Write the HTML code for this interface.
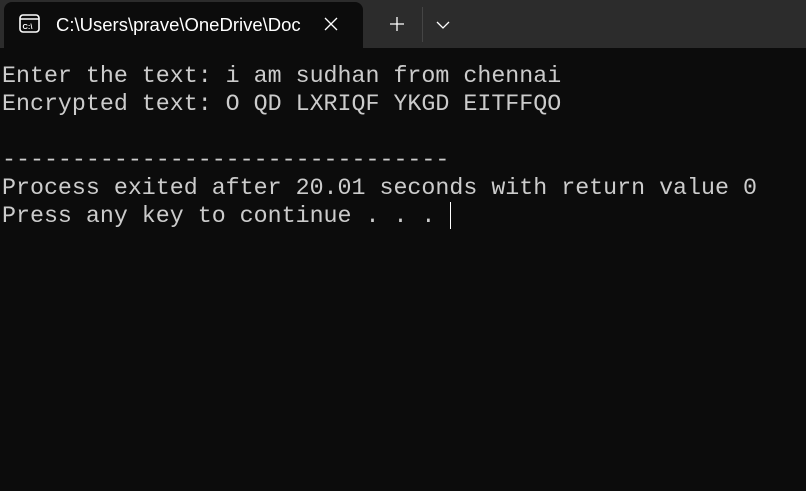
<!DOCTYPE html>
<html><head><meta charset="utf-8"><style>
html,body{margin:0;padding:0;width:806px;height:491px;overflow:hidden;background:#0c0c0c;}
.bar{position:absolute;left:0;top:0;width:806px;height:48px;background:#2c2c2c;}
.tab{position:absolute;left:4px;top:2px;width:359px;height:48px;background:#0c0c0c;border-radius:8px 8px 0 0;}
.title{position:absolute;left:56px;top:14px;font:18.5px "Liberation Sans",sans-serif;color:#ffffff;white-space:nowrap;width:246px;overflow:hidden;}
.term{position:absolute;left:2px;top:62px;font:23.3px/28px "Liberation Mono",monospace;color:#cccccc;white-space:pre;}
.cursor{position:absolute;left:450px;top:202px;width:1px;height:27px;background:#ffffff;}
.sep{position:absolute;left:422px;top:7px;width:1px;height:35px;background:#454545;}
</style></head><body>
<div class="bar"></div>
<div class="tab"></div>
<svg style="position:absolute;left:19px;top:14px" width="22" height="20" viewBox="0 0 22 20">
<rect x="1" y="1" width="19" height="17" rx="3" fill="none" stroke="#fff" stroke-width="1.6"/>
<line x1="1" y1="5" x2="20" y2="5" stroke="#fff" stroke-width="1.4"/>
<text x="3.5" y="15" font-family="Liberation Sans,sans-serif" font-size="7.5" font-weight="bold" fill="#fff">C:\</text>
</svg>
<div class="title">C:\Users\prave\OneDrive\Doc</div>
<svg style="position:absolute;left:324px;top:17px" width="14" height="14" viewBox="0 0 14 14"><path d="M1 1L13 13M13 1L1 13" stroke="#fff" stroke-width="1.3"/></svg>
<svg style="position:absolute;left:389px;top:16px" width="16" height="16" viewBox="0 0 16 16"><path d="M8 1V15M1 8H15" stroke="#fff" stroke-width="1.3"/></svg>
<div class="sep"></div>
<svg style="position:absolute;left:436px;top:20px" width="14" height="10" viewBox="0 0 14 10"><path d="M1 2L7 8L13 2" fill="none" stroke="#fff" stroke-width="1.3"/></svg>
<div class="term">Enter the text: i am sudhan from chennai
Encrypted text: O QD LXRIQF YKGD EITFFQO

--------------------------------
Process exited after 20.01 seconds with return value 0
Press any key to continue . . . </div>
<div class="cursor"></div>
</body></html>
